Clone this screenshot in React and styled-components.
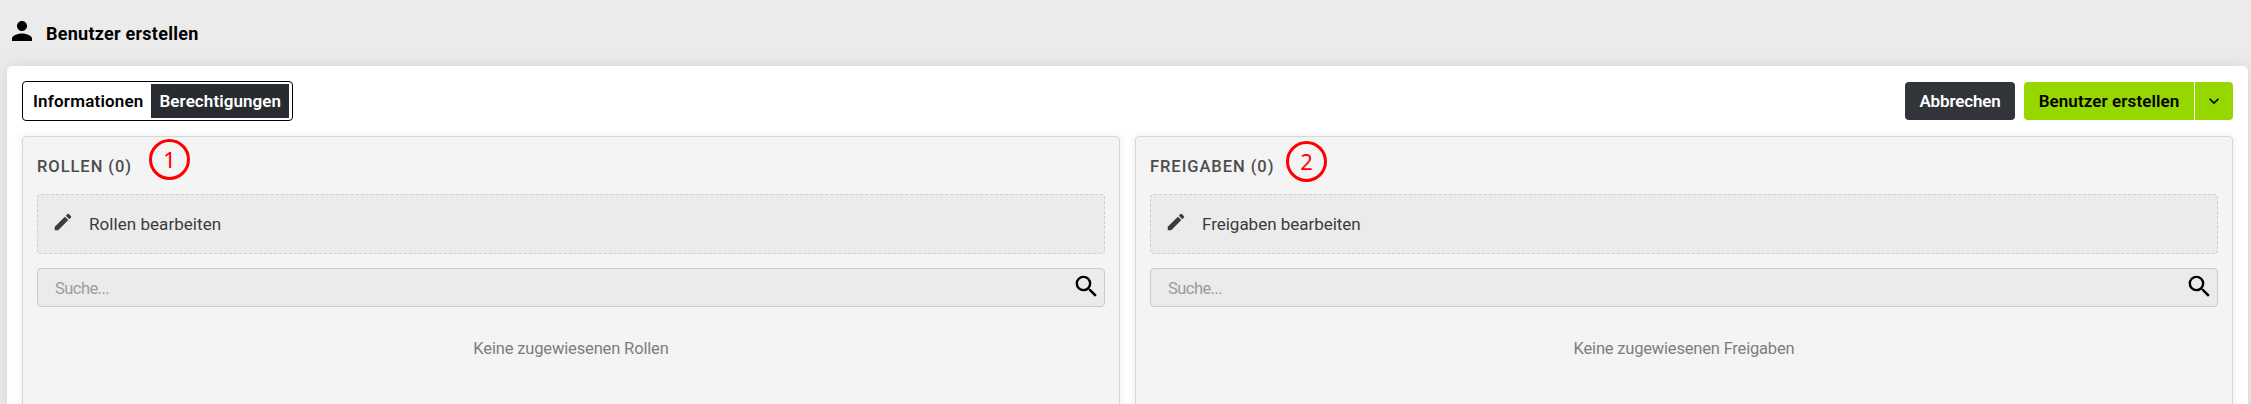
import React from 'react';
import styled, { createGlobalStyle } from 'styled-components';

const GlobalStyle = createGlobalStyle`
  *, *::before, *::after { box-sizing: border-box; }
  body {
    margin: 0;
    background: #ebebeb;
    color: #000;
    font-family: Roboto, "Liberation Sans", sans-serif;
    font-size: 17px;
    overflow: hidden;
  }
  button, input { font: inherit; color: inherit; }
`;

const Page = styled.div`
  display: flex;
  flex-direction: column;
  height: 404px;
  overflow: hidden;
`;

const PageHeader = styled.header`
  display: flex;
  flex: none;
  height: 66px;
  padding-left: 7px;
`;

const Title = styled.h1`
  margin: 23px 0 0 9px;
  font-size: 18px;
  line-height: 22px;
  font-weight: 700;
  letter-spacing: 0.25px;
`;

const Icon = styled.svg`
  display: block;
  flex: none;
  width: ${(p) => p.$size}px;
  height: ${(p) => p.$size}px;
  fill: currentColor;
`;

const UserIcon = styled(Icon)`
  margin-top: 16px;
`;

const Panel = styled.main`
  flex: none;
  height: 400px;
  margin: 0 3px 0 7px;
  padding: 15px;
  background: #fff;
  border-radius: 5px;
  box-shadow: 0 0 16px rgba(0, 0, 0, 0.1);
`;

const Toolbar = styled.div`
  display: flex;
  justify-content: space-between;
  align-items: flex-start;
  height: 55px;
`;

const Tabs = styled.div`
  display: flex;
  width: 271px;
  height: 40px;
  padding: 2px 3px 2px 2px;
  background: #fff;
  border: 1px solid #000;
  border-radius: 4px;
`;

const Tab = styled.button`
  flex: none;
  width: ${(p) => p.$width}px;
  padding: 0 0 0 ${(p) => p.$indent}px;
  border: 0;
  background: ${(p) => (p.$active ? '#282c31' : 'transparent')};
  color: ${(p) => (p.$active ? '#fff' : '#000')};
  font-weight: 600;
  letter-spacing: ${(p) => p.$tracking}px;
  text-align: left;
  white-space: nowrap;
`;

const Actions = styled.div`
  display: flex;
  padding-top: 1px;
`;

const Button = styled.button`
  width: ${(p) => p.$width}px;
  height: 38px;
  padding: 0;
  border: 0;
  border-radius: 4px;
  font-weight: 600;
  white-space: nowrap;
`;

const CancelButton = styled(Button)`
  margin-right: 9px;
  background: #313439;
  color: #fff;
  letter-spacing: -0.15px;
`;

const SplitButton = styled.div`
  display: flex;
  gap: 1px;
`;

const PrimaryButton = styled(Button)`
  background: #97d700;
  border-radius: 4px 0 0 4px;
  letter-spacing: 0.1px;
`;

const MenuButton = styled(Button)`
  display: grid;
  place-items: center;
  background: #97d700;
  border-radius: 0 4px 4px 0;
`;

const Columns = styled.div`
  display: grid;
  grid-template-columns: 1fr 1fr;
  gap: 15px;
  height: 330px;
`;

const Card = styled.section`
  min-width: 0;
  padding: 0 14px;
  background: #f4f4f4;
  border: 1px solid #d7d7d7;
  border-radius: 4px;
  box-shadow: 0 0 8px rgba(0, 0, 0, 0.08);
`;

const CardHeader = styled.div`
  position: relative;
  height: 57px;
  padding-top: 18px;
`;

const Heading = styled.h2`
  margin: 0;
  color: #4c4c4c;
  font-size: 16.5px;
  line-height: 24px;
  font-weight: 500;
  letter-spacing: 0.95px;
`;

const Marker = styled.span`
  position: absolute;
  left: ${(p) => p.$left}px;
  top: ${(p) => p.$top}px;
  display: grid;
  place-items: center;
  width: 41px;
  height: 41px;
  border: 3px solid #f00;
  border-radius: 50%;
  color: #f00;
  font-family: "Noto Sans", sans-serif;
  font-size: 22px;
  line-height: 33px;
  padding-bottom: 1px;
`;

const EditRow = styled.button`
  display: flex;
  align-items: center;
  width: 100%;
  height: 60px;
  padding: 0 14px;
  background: #ebebeb;
  border: 1px dashed #cfcfcf;
  border-radius: 4px;
  color: #3b3b3b;
  text-align: left;
`;

const EditIcon = styled(Icon)`
  margin-top: -4px;
`;

const EditLabel = styled.span`
  margin-left: 15px;
  letter-spacing: ${(p) => p.$tracking}px;
`;

const SearchField = styled.label`
  display: flex;
  align-items: center;
  height: 39px;
  margin-top: 14px;
  padding: 0 3px 0 17px;
  background: #ebebeb;
  border: 1px solid #cbcbcb;
  border-radius: 4px;
`;

const SearchInput = styled.input`
  flex: 1;
  min-width: 0;
  height: 100%;
  padding: 1px 0 0;
  border: 0;
  outline: 0;
  background: transparent;
  font-size: 16.5px;
  letter-spacing: -0.55px;

  &::placeholder {
    color: #9b9b9b;
    opacity: 1;
  }
`;

const SearchIcon = styled(Icon)`
  margin-top: -2px;
`;

const EmptyText = styled.p`
  margin: 30px 0 0;
  color: #7d7d7d;
  font-size: 16.5px;
  line-height: 24px;
  text-align: center;
  letter-spacing: ${(p) => p.$tracking}px;
`;

const paths = {
  user: 'M12 12c2.21 0 4-1.79 4-4s-1.79-4-4-4-4 1.79-4 4 1.79 4 4 4zm0 2c-2.67 0-8 1.34-8 4v2h16v-2c0-2.66-5.33-4-8-4z',
  edit: 'M3 17.25V21h3.75L17.81 9.94l-3.75-3.75L3 17.25zM20.71 7.04a.996.996 0 0 0 0-1.41l-2.34-2.34a.996.996 0 0 0-1.41 0l-1.83 1.83 3.75 3.75 1.83-1.83z',
  search: 'M15.5 14h-.79l-.28-.27A6.471 6.471 0 0 0 16 9.5 6.5 6.5 0 1 0 9.5 16c1.61 0 3.09-.59 4.23-1.57l.27.28v.79l5 4.99L20.49 19l-4.99-5zm-6 0C7.01 14 5 11.99 5 9.5S7.01 5 9.5 5 14 7.01 14 9.5 11.99 14 9.5 14z',
  chevron: 'M16.59 8.59 12 13.17 7.41 8.59 6 10l6 6 6-6z',
};

const sections = [
  {
    name: 'Rollen',
    title: 'ROLLEN (0)',
    marker: { number: 1, left: 112, top: 2 },
    editTracking: 0.05,
    emptyTracking: -0.15,
  },
  {
    name: 'Freigaben',
    title: 'FREIGABEN (0)',
    marker: { number: 2, left: 136, top: 4 },
    editTracking: -0.02,
    emptyTracking: -0.19,
  },
];

function AssignmentCard({ name, title, marker, editTracking, emptyTracking }) {
  return (
    <Card>
      <CardHeader>
        <Heading>{title}</Heading>
        <Marker $left={marker.left} $top={marker.top}>{marker.number}</Marker>
      </CardHeader>
      <EditRow type="button">
        <EditIcon $size={22} viewBox="0 0 24 24"><path d={paths.edit} /></EditIcon>
        <EditLabel $tracking={editTracking}>{name} bearbeiten</EditLabel>
      </EditRow>
      <SearchField>
        <SearchInput placeholder="Suche..." />
        <SearchIcon $size={29} viewBox="0 0 24 24"><path d={paths.search} /></SearchIcon>
      </SearchField>
      <EmptyText $tracking={emptyTracking}>Keine zugewiesenen {name}</EmptyText>
    </Card>
  );
}

export default function App() {
  return (
    <>
      <GlobalStyle />
      <Page>
        <PageHeader>
          <UserIcon $size={30} viewBox="0 0 24 24"><path d={paths.user} /></UserIcon>
          <Title>Benutzer erstellen</Title>
        </PageHeader>
        <Panel>
          <Toolbar>
            <Tabs>
              <Tab type="button" $width={126} $indent={8} $tracking={0.2}>Informationen</Tab>
              <Tab type="button" $width={138} $indent={8.5} $tracking={0.08} $active>Berechtigungen</Tab>
            </Tabs>
            <Actions>
              <CancelButton type="button" $width={110}>Abbrechen</CancelButton>
              <SplitButton>
                <PrimaryButton type="button" $width={170}>Benutzer erstellen</PrimaryButton>
                <MenuButton type="button" $width={38}>
                  <Icon $size={20} viewBox="0 0 24 24"><path d={paths.chevron} /></Icon>
                </MenuButton>
              </SplitButton>
            </Actions>
          </Toolbar>
          <Columns>
            {sections.map((section) => <AssignmentCard key={section.name} {...section} />)}
          </Columns>
        </Panel>
      </Page>
    </>
  );
}
